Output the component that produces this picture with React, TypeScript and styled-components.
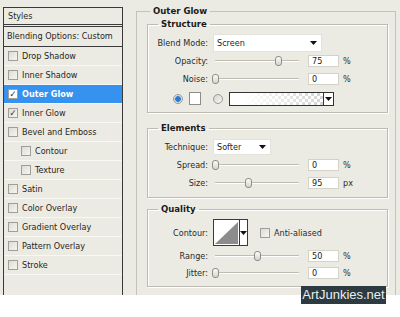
import React from "react";
import styled, { createGlobalStyle } from "styled-components";

const GlobalStyle = createGlobalStyle`
  html, body { margin: 0; padding: 0; background: #ffffff; }
  body {
    font-family: "DejaVu Sans", Tahoma, sans-serif;
    font-stretch: condensed;
    font-size: 9px;
    color: #1f1f1f;
  }
`;

const effects = [
  { name: "Drop Shadow", checked: false },
  { name: "Inner Shadow", checked: false },
  { name: "Outer Glow", checked: true, selected: true },
  { name: "Inner Glow", checked: true },
  { name: "Bevel and Emboss", checked: false },
  { name: "Contour", checked: false, indent: true },
  { name: "Texture", checked: false, indent: true },
  { name: "Satin", checked: false },
  { name: "Color Overlay", checked: false },
  { name: "Gradient Overlay", checked: false },
  { name: "Pattern Overlay", checked: false },
  { name: "Stroke", checked: false },
];

const Arrow = () => (
  <svg width="7" height="4" viewBox="0 0 7 4">
    <path d="M0 0 H7 L3.5 4 Z" fill="#111" />
  </svg>
);

function Slider({ value, max }: { value: number; max: number }) {
  const left = 2 + (value / max) * 84 - 3;
  return (
    <SliderWrap>
      <Track />
      <Thumb style={{ left }} />
    </SliderWrap>
  );
}

function SliderRow(props: { label: string; value: number; max: number; unit: string; h: number }) {
  return (
    <Row $h={props.h}>
      <Label>{props.label}</Label>
      <Slider value={props.value} max={props.max} />
      <NumberBox>{props.value}</NumberBox>
      <Unit>{props.unit}</Unit>
    </Row>
  );
}

export default function App() {
  return (
    <Frame>
      <GlobalStyle />
      <Page>
        <StylesPanel>
          <PanelHeader>Styles</PanelHeader>
          <BlendingRow>Blending Options: Custom</BlendingRow>
          {effects.map((e) => (
            <EffectRow key={e.name} $selected={!!e.selected} $indent={!!e.indent}>
              <Check $white={!!e.selected}>{e.checked ? "✓" : ""}</Check>
              <span>{e.name}</span>
            </EffectRow>
          ))}
        </StylesPanel>

        <RightArea>
          <OuterSet>
            <OuterLegend>Outer Glow</OuterLegend>

            <GroupSet $pt={4} $pb={5}>
              <GroupLegend>Structure</GroupLegend>
              <Row $h={18}>
                <Label>Blend Mode:</Label>
                <SelectBox $w={109} $h={18}>
                  Screen
                  <ArrowSlot>
                    <Arrow />
                  </ArrowSlot>
                </SelectBox>
              </Row>
              <SliderRow label="Opacity:" value={75} max={100} unit="%" h={18} />
              <SliderRow label="Noise:" value={0} max={100} unit="%" h={18} />
              <ColorRow>
                <Radio $on />
                <Swatch />
                <Radio />
                <GradientBox>
                  <Checker />
                  <DropPart>
                    <Arrow />
                  </DropPart>
                </GradientBox>
              </ColorRow>
            </GroupSet>

            <GroupSet $pt={4} $pb={6} $mt={9}>
              <GroupLegend>Elements</GroupLegend>
              <Row $h={18}>
                <Label>Technique:</Label>
                <SelectBox $w={58} $h={16}>
                  Softer
                  <ArrowSlot>
                    <Arrow />
                  </ArrowSlot>
                </SelectBox>
              </Row>
              <SliderRow label="Spread:" value={0} max={100} unit="%" h={18} />
              <SliderRow label="Size:" value={95} max={240} unit="px" h={17} />
            </GroupSet>

            <GroupSet $pt={3} $pb={5} $mt={5}>
              <GroupLegend>Quality</GroupLegend>
              <Row $h={29}>
                <Label>Contour:</Label>
                <ContourBox>
                  <ContourPreview>
                    <svg width="25" height="24" viewBox="0 0 25 24">
                      <path d="M1 23 L24 1 L24 23 Z" fill="#8c8c8c" />
                    </svg>
                  </ContourPreview>
                  <ContourDrop>
                    <Arrow />
                  </ContourDrop>
                </ContourBox>
                <AntiCheck />
                <AntiText>Anti-aliased</AntiText>
              </Row>
              <SliderRow label="Range:" value={50} max={100} unit="%" h={18} />
              <SliderRow label="Jitter:" value={0} max={100} unit="%" h={16} />
            </GroupSet>
          </OuterSet>
        </RightArea>
      </Page>
      <Watermark>ArtJunkies.net</Watermark>
    </Frame>
  );
}

const Frame = styled.div`
  position: relative;
  width: 400px;
  height: 317px;
`;

const Page = styled.div`
  height: 295px;
  background: #ecebe3;
  display: flex;
  overflow: hidden;
`;

const StylesPanel = styled.div`
  flex: none;
  margin: 7px 0 0 3px;
  width: 118px;
  border: 1px solid #3a3a3a;
  border-bottom: none;
`;

const PanelHeader = styled.div`
  height: 16px;
  line-height: 16px;
  padding-left: 4px;
  border-bottom: 3px double #3a3a3a;
`;

const BlendingRow = styled.div`
  height: 19px;
  line-height: 19px;
  padding-left: 3px;
  border-bottom: 1px solid #3a3a3a;
  white-space: nowrap;
`;

const EffectRow = styled.div<{ $selected: boolean; $indent: boolean }>`
  box-sizing: border-box;
  height: 19px;
  display: flex;
  align-items: center;
  gap: 4px;
  padding-left: ${(p) => (p.$indent ? 17 : 4)}px;
  border-bottom: 1px solid #f8f7f2;
  background: ${(p) => (p.$selected ? "#3592ee" : "transparent")};
  color: ${(p) => (p.$selected ? "#ffffff" : "#1f1f1f")};
  font-weight: ${(p) => (p.$selected ? "bold" : "normal")};
  white-space: nowrap;
`;

const Check = styled.span<{ $white: boolean }>`
  box-sizing: border-box;
  width: 10px;
  height: 10px;
  flex: none;
  border: 1px solid #a09e96;
  background: ${(p) => (p.$white ? "#ffffff" : "linear-gradient(135deg, #dedcd4, #f6f5f0)")};
  color: #1b2a52;
  font-size: 9px;
  font-weight: bold;
  line-height: 8px;
  text-align: center;
`;

const RightArea = styled.div`
  flex: none;
  margin-left: 13px;
`;

const OuterSet = styled.fieldset`
  box-sizing: border-box;
  width: 260px;
  min-width: 0;
  min-height: 320px;
  margin: 5px 0 0 0;
  padding: 1px 0 0 10px;
  border: 1px solid #c4c2b9;
`;

const OuterLegend = styled.legend`
  margin-left: 3px;
  padding: 0 3px;
  font-weight: bold;
  font-size: 9.5px;
  line-height: 12px;
  color: #1a1a1a;
`;

const GroupSet = styled.fieldset<{ $pt: number; $pb: number; $mt?: number }>`
  box-sizing: border-box;
  width: 241px;
  min-width: 0;
  margin: ${(p) => p.$mt || 0}px 0 0 0;
  padding: ${(p) => p.$pt}px 0 ${(p) => p.$pb}px 0;
  border: 1px solid #bdbbb2;
  box-shadow: inset 1px 1px 0 #ffffff, 1px 1px 0 #ffffff;
`;

const GroupLegend = styled.legend`
  margin-left: 10px;
  padding: 0 3px;
  font-weight: bold;
  font-size: 9.5px;
  line-height: 12px;
  color: #1a1a1a;
`;

const Row = styled.div<{ $h: number }>`
  height: ${(p) => p.$h}px;
  display: flex;
  align-items: center;
`;

const Label = styled.span`
  flex: none;
  width: 60px;
  margin-right: 5px;
  text-align: right;
  color: #2a2a2a;
  white-space: nowrap;
`;

const SelectBox = styled.div<{ $w: number; $h: number }>`
  box-sizing: border-box;
  position: relative;
  width: ${(p) => p.$w}px;
  height: ${(p) => p.$h}px;
  display: flex;
  align-items: center;
  padding-left: 3px;
  background: #ffffff;
  border: 1px solid #e4e2da;
`;

const ArrowSlot = styled.span`
  position: absolute;
  right: 4px;
  top: 50%;
  margin-top: -2px;
  display: flex;
`;

const SliderWrap = styled.div`
  position: relative;
  flex: none;
  width: 88px;
  height: 12px;
`;

const Track = styled.div`
  position: absolute;
  left: 2px;
  right: 2px;
  top: 5px;
  height: 1px;
  background: #bebcb3;
  border-bottom: 1px solid #ffffff;
`;

const Thumb = styled.div`
  position: absolute;
  top: 1px;
  box-sizing: border-box;
  width: 7px;
  height: 10px;
  border: 1px solid #8f8d86;
  border-radius: 3px;
  background: linear-gradient(#fbfbf8, #d6d4cb);
`;

const NumberBox = styled.div`
  box-sizing: border-box;
  flex: none;
  width: 31px;
  height: 12px;
  margin-left: 7px;
  padding-left: 3px;
  line-height: 10px;
  background: #ffffff;
  border: 1px solid #d4d2c9;
  color: #222;
`;

const Unit = styled.span`
  margin-left: 4px;
  color: #2a2a2a;
`;

const ColorRow = styled.div`
  height: 17px;
  margin-top: 2px;
  display: flex;
  align-items: center;
  padding-left: 25px;
`;

const Radio = styled.span<{ $on?: boolean }>`
  box-sizing: border-box;
  flex: none;
  width: 10px;
  height: 10px;
  border-radius: 50%;
  border: 1px solid #9c9a93;
  margin-right: 6px;
  background: ${(p) =>
    p.$on
      ? "radial-gradient(circle, #2f79d0 0 2.5px, #9cc2ea 3px, #f4f4f0 4px)"
      : "linear-gradient(135deg, #d6d4cc, #f7f6f2)"};

  & + & {
    margin-left: 0;
  }
`;

const Swatch = styled.span`
  box-sizing: border-box;
  flex: none;
  width: 12px;
  height: 13px;
  margin-right: 12px;
  background: #ffffff;
  border: 1px solid #8e8c86;
`;

const GradientBox = styled.div`
  box-sizing: border-box;
  flex: none;
  width: 105px;
  height: 14px;
  display: flex;
  border: 1px solid #333333;
  background: #ffffff;
`;

const Checker = styled.div`
  flex: 1;
  background: linear-gradient(to right, #ffffff 15%, rgba(255, 255, 255, 0)),
    repeating-conic-gradient(#d4d4d4 0 25%, #ffffff 0 50%) 0 0 / 6px 6px;
`;

const DropPart = styled.div`
  width: 9px;
  border-left: 1px solid #333333;
  display: flex;
  align-items: center;
  justify-content: center;
  background: #ffffff;
`;

const ContourBox = styled.div`
  box-sizing: border-box;
  flex: none;
  width: 35px;
  height: 27px;
  display: flex;
  border: 1px solid #3a3a3a;
  background: #ffffff;
`;

const ContourPreview = styled.div`
  width: 25px;
  display: flex;
  align-items: flex-end;
`;

const ContourDrop = styled.div`
  flex: 1;
  border-left: 1px solid #3a3a3a;
  display: flex;
  justify-content: center;
  padding-top: 11px;
`;

const AntiCheck = styled.span`
  box-sizing: border-box;
  flex: none;
  width: 10px;
  height: 10px;
  margin-left: 12px;
  border: 1px solid #a09e96;
  background: linear-gradient(135deg, #dedcd4, #f6f5f0);
`;

const AntiText = styled.span`
  margin-left: 4px;
  color: #2a2a2a;
`;

const Watermark = styled.div`
  position: absolute;
  left: 301px;
  top: 286px;
  width: 85px;
  height: 18px;
  background: #2b3b41;
  color: #e9eef0;
  font-family: "Liberation Sans", Arial, sans-serif;
  font-stretch: normal;
  font-size: 13px;
  line-height: 18px;
  text-align: center;
`;
